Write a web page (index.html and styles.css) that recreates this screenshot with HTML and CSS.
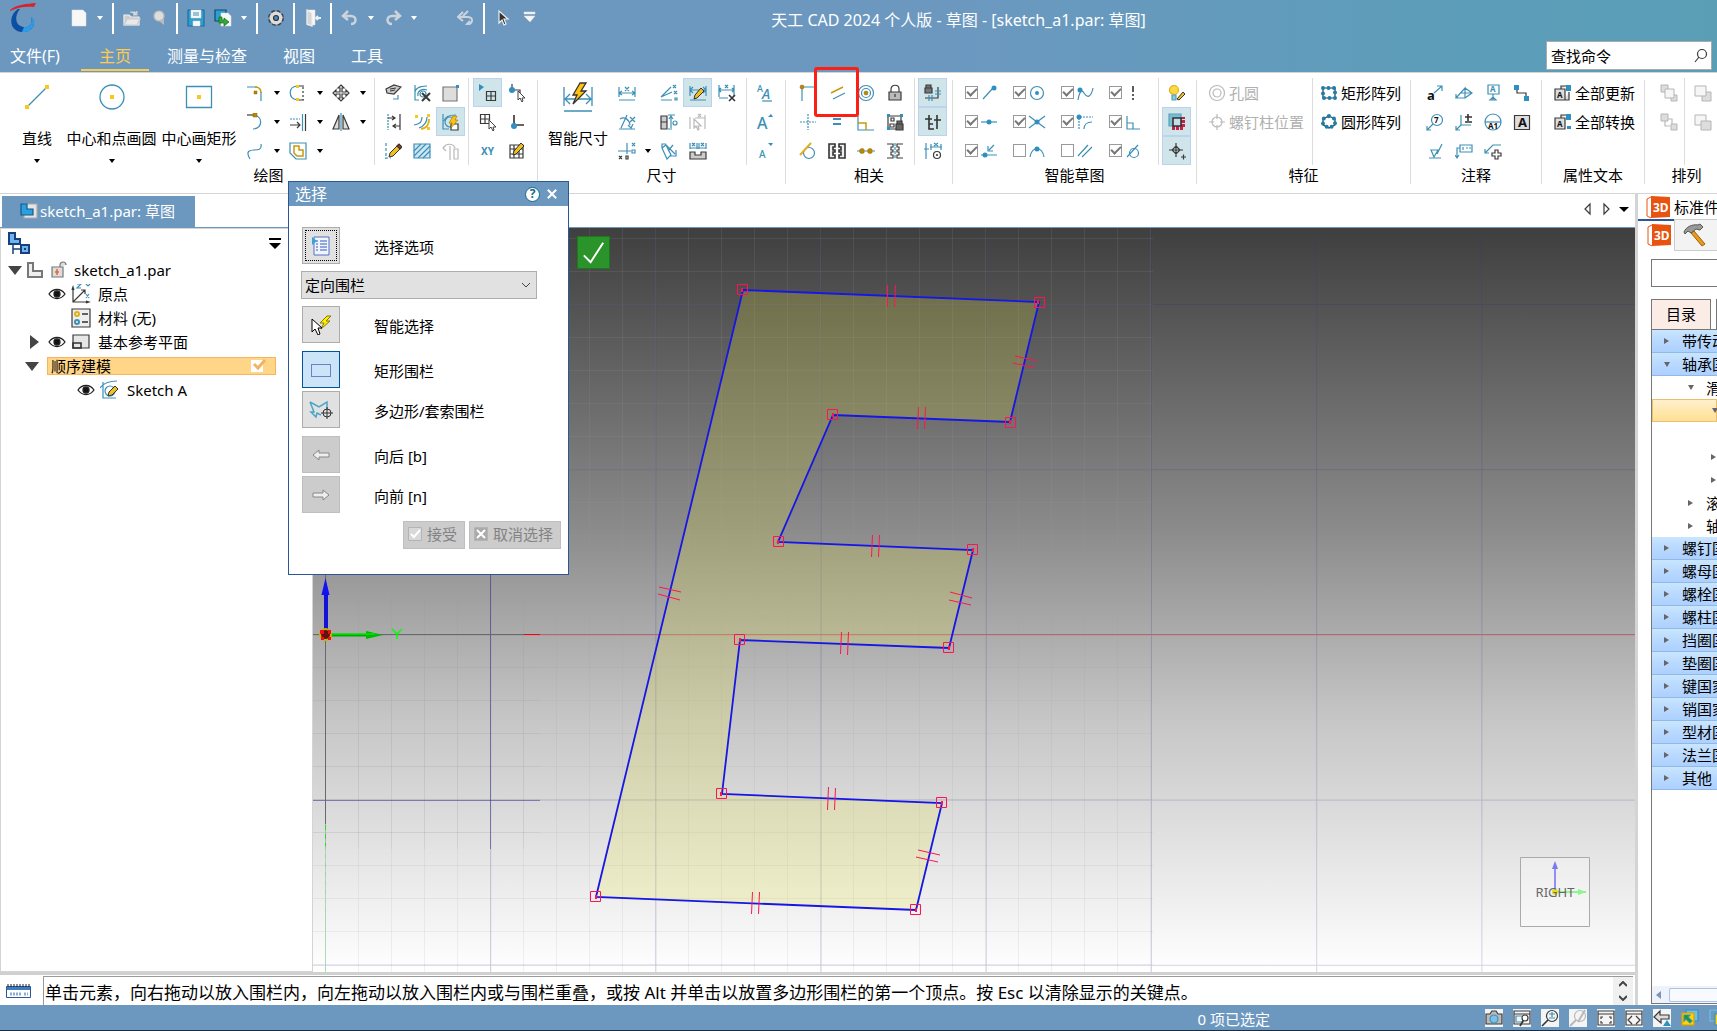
FILE: index.html
```html
<!DOCTYPE html>
<html lang="zh-CN">
<head>
<meta charset="utf-8">
<title>天工 CAD 2024 个人版 - 草图</title>
<link rel="stylesheet" href="styles.css">
</head>
<body>
<header class="head">
  <div class="quick">
    <svg class="logo" viewBox="0 0 30 30"><path d="M1 7C8 1 18 1 27 0L25 4C17 3 9 4 1 8Z" fill="#d8232a"/><path d="M9 6C-1 13 0 28 13 29C23 30 29 20 22 14C24 21 20 25 15 24C6 23 5 13 11 6Z" fill="#0b4fa5"/><path d="M15 24C20 25 24 21 22 14C29 20 23 30 13 29Z" fill="#2d9be8"/></svg>
    <button class="q q1" aria-label="新建"><svg class="i" viewBox="0 0 18 18"><path class="fw" d="M2 1h11l3 3v13H2z"/></svg></button>
    <span class="car w"></span><span class="bar"></span>
    <button class="q" aria-label="打开"><svg class="i" viewBox="0 0 18 18"><path d="M1 16V6h5l2 2h8v8z" fill="#ccc" stroke="#eee"/><path d="M7 3h5l2 3M14 2v4h-4M1 16l3-6h13l-3 6z" fill="#e8e8e8" stroke="#ccc"/></svg></button>
    <button class="q" aria-label="关联"><svg class="i" viewBox="0 0 18 18"><circle cx="9" cy="7" r="5" fill="#ddd" stroke="#bbb"/><path d="M9 12l5 4V9" fill="#bbb" stroke="none"/></svg></button>
    <span class="bar"></span>
    <button class="q" aria-label="保存"><svg class="i" viewBox="0 0 18 18"><path d="M1 1h16v16H1z" fill="#2f9fd0" stroke="#1b6f9d"/><path class="fw" d="M4 1h10v8H4zM6 12h7v5H6z"/><path d="M6 4h6M6 6h6"/></svg></button>
    <button class="q" aria-label="另存为"><svg class="i" viewBox="0 0 18 18"><path d="M1 1h11v11H1z" fill="#2f9fd0" stroke="#124a70"/><path class="fw" d="M7 4h7l3 3v10H7z"/><path d="M5 8v6h5v3l5-4-5-4v2H8V8z" fill="#2eab35" stroke="#136b1a" stroke-width=".7"/></svg></button>
    <span class="car w"></span><span class="bar"></span>
    <button class="q" aria-label="选项"><svg class="i" viewBox="0 0 18 18"><circle cx="9" cy="9" r="6" fill="#e6e6e6" stroke="#444" stroke-width="4" stroke-dasharray="3 1.7"/><circle cx="9" cy="9" r="5.500" fill="#ddd" stroke="#ddd" stroke-width="2"/><circle cx="9" cy="9" r="2.500" fill="#4d86b5" stroke="#333"/></svg></button>
    <span class="bar"></span>
    <button class="q" aria-label="关闭"><svg class="i" viewBox="0 0 18 18"><path class="fw" d="M3 1h8v15H3z"/><path d="M3 1l5 3v13l-5-2z" fill="#d5d5d5" stroke="#eee"/><path d="M17 9h-5m2-2l-2 2 2 2" stroke="#eee" stroke-width="2"/></svg></button>
    <span class="bar"></span>
    <button class="q" aria-label="撤销"><svg class="i" viewBox="0 0 18 18"><path d="M7 2L2 7l5 4M3 7h7c6 0 6 8 0 8" stroke="#ccd3da" stroke-width="2.500"/></svg></button>
    <span class="car w"></span>
    <button class="q" aria-label="重做"><svg class="i" viewBox="0 0 18 18"><path d="M11 2l5 5-5 4M15 7H8c-6 0-6 8 0 8" stroke="#ccd3da" stroke-width="2.500"/></svg></button>
    <span class="car w"></span>
    <button class="q far" aria-label="返回"><svg class="i" viewBox="0 0 18 18"><path d="M6 3L1 8l5 4M11 2L6 7M2 8h9c6 0 5 8-1 7l3-3" stroke="#ccd3da" stroke-width="2"/></svg></button>
    <span class="bar"></span>
    <button class="q" aria-label="选择"><svg class="i" viewBox="0 0 18 18"><path d="M5 2v12l3-3 2 5 2-1-2-5h4z" fill="#333" stroke="#eee"/></svg></button>
    <button class="q" aria-label="自定义"><svg class="i" viewBox="0 0 18 18"><path class="fw" d="M3 3h11v2H3zM3 7h11l-5 6z"/></svg></button>
    <h1 class="title">天工 CAD 2024 个人版 - 草图 - [sketch_a1.par: 草图]</h1>
  </div>
  <nav class="tabs">
    <a href="#file">文件(F)</a><a href="#home" class="on">主页</a><a href="#measure">测量与检查</a><a href="#view">视图</a><a href="#tools">工具</a>
    <label class="find"><input type="text" value="查找命令" aria-label="查找命令"><svg class="i" viewBox="0 0 18 18"><circle class="k" cx="11" cy="7" r="4.500"/><path class="k" d="M8 10l-4 5"/></svg></label>
  </nav>
</header>

<section class="ribbon">
  <div class="grp g1"><div class="row">
    <button class="big b-line"><svg viewBox="0 0 30 30"><path d="M5 25L25 5"/><path class="fy" d="M3 23h4v4H3zM23 3h4v4h-4z"/></svg><span>直线</span><i class="car"></i></button>
    <button class="big b-circ"><svg viewBox="0 0 30 30"><circle cx="15" cy="15" r="12"/><path class="fy" d="M13 13h4v4h-4z"/></svg><span>中心和点画圆</span><i class="car"></i></button>
    <button class="big b-rect"><svg viewBox="0 0 30 30"><path d="M2.500 4.500h25v21h-25z"/><path class="fy" d="M13 13h4v4h-4z"/></svg><span>中心画矩形</span><i class="car"></i></button>
    <div class="grid pairs">
      <button class="t"><svg class="i" viewBox="0 0 18 18"><path d="M1 3h10M15 8v9"/><path class="y" d="M9 3c4 0 6 2 6 6"/><path class="fd" d="M8 7h3v3H8z"/></svg></button>
      <button class="t"><svg class="i" viewBox="0 0 18 18"><path d="M8 2c9 2 9 13-1 14"/><path class="k" d="M1 2h7"/><path class="fd" d="M7 0h4v4H7z"/></svg></button>
      <button class="t"><svg class="i" viewBox="0 0 18 18"><path d="M4 17C-1 9 4 8 8 8s8 0 7-6"/></svg></button>
      <i class="car"></i><i class="car"></i><i class="car"></i>
      <button class="t"><svg class="i" viewBox="0 0 18 18"><path d="M8 2C-1 3-1 14 8 16"/><path class="k" d="M9 2h6M9 16h6"/><path class="k" stroke-dasharray="2 2" d="M14 3v13"/><path class="fy" d="M7 1h3v3H7zM7 14h3v3H7z"/></svg></button>
      <button class="t"><svg class="i" viewBox="0 0 18 18"><path stroke-dasharray="2 1" d="M1 6h10"/><path class="k" d="M1 12h10M8 9l3 3-3 3M16.500 1v17"/><path d="M13.500 1v17"/></svg></button>
      <button class="t"><svg class="i" viewBox="0 0 18 18"><path d="M1 1h16v16H7l-6-6z"/><path class="y" d="M5 4h5v4h4v6H8l-3-3z"/></svg></button>
      <i class="car"></i><i class="car"></i><i class="car"></i>
      <button class="t"><svg class="i" viewBox="0 0 18 18"><path class="k" fill="#fff" d="M9 1l3 3h-2v4h4V6l3 3-3 3v-2h-4v4h2l-3 3-3-3h2v-4H4v2L1 9l3-3v2h4V4H6z"/></svg></button>
      <button class="t"><svg class="i" viewBox="0 0 18 18"><path class="k" fill="#ddd" d="M7 2v14H1zM11 2v14h6z"/><path d="M9 0v18"/></svg></button>
      <span></span><i class="car"></i><i class="car"></i>
    </div>
    <span class="sep"></span>
    <div class="grid">
      <button class="t"><svg class="i" viewBox="0 0 18 18"><path class="k" fill="#ccc" d="M2 5l8-4 7 2-7 7-7-1zM6 5l6-1M6 7l5-1"/><path d="M9 15h5v-4"/></svg></button>
      <button class="t"><svg class="i" viewBox="0 0 18 18"><path stroke-dasharray="2 1" d="M4 1v16"/><path class="k" d="M16 1v16M4 5h7M8 3l3 2-3 2M16 13h-6M12 11l-3 2 3 2"/></svg></button>
      <button class="t"><svg class="i" viewBox="0 0 18 18"><path stroke-dasharray="3 2" d="M2 1v16M1 16h6"/><path class="pen" d="M5 15l1-4 8-8 3 3-8 8z"/><path d="M13 4l2-2 3 3-2 2z" fill="#a33" stroke="#333"/></svg></button>
      <button class="t"><svg class="i" viewBox="0 0 18 18"><path d="M2 1v15h4M2 9C2 4 7 2 14 2M5 12c-1-5 4-8 9-6"/><circle cx="10" cy="10" r="3"/><path class="k" stroke-width="2" d="M9 9l8 8M17 9l-8 8"/></svg></button>
      <button class="t"><svg class="i" viewBox="0 0 18 18"><path d="M9 4c0 5-2 7-8 8M14 4c0 6-3 9-8 11"/><path class="y2" d="M16 6c0 6-2 9-8 10"/><path class="fy" d="M2 2h3v3H2zM14 1h3v3h-3zM14 14h3v3h-3z"/></svg></button>
      <button class="t"><svg class="i" viewBox="0 0 18 18"><path d="M1 2h16v14H1z" fill="#cde7f2"/><path d="M1 9l7-7M1 14L13 2M5 16L17 4M10 16l7-7" /></svg></button>
      <button class="t"><svg class="i" viewBox="0 0 18 18"><path class="gs" fill="#ddd" d="M1 3h14v14H1z"/><path class="fb" d="M14 1h3v3h-3z"/></svg></button>
      <button class="t on"><svg class="i" viewBox="0 0 18 18"><path d="M1 1v15h6M2 8c1-5 6-6 12-6"/><circle cx="8" cy="9" r="5"/><path class="k" fill="#fff" d="M9 11h7v6H9z"/><path d="M11 3L7 10h3l-1 5 7-8h-3l2-4z" fill="#ffc20e" stroke="#876000" stroke-width=".5"/></svg></button>
      <button class="t"><svg class="i" viewBox="0 0 18 18"><path class="gl" d="M4 3L1 6l3 3M1 6c3-5 10-5 12 0M8 4v14M12 7h4v10h-4z"/></svg></button>
    </div>
    <span class="sep s3"></span>
    <div class="grid">
      <button class="t on"><svg class="i" viewBox="0 0 18 18"><path class="fb" d="M0 0l5 3-5 4z"/><path class="k" d="M7.500 7.500h9v9h-9zM12 7v10M7 12h10"/></svg></button>
      <button class="t"><svg class="i" viewBox="0 0 18 18"><path class="k" d="M1.500 1.500h9v9h-9zM6 1v10M1 6h10"/><path class="cur" d="M10 7v9l2-2 2 4 1-1-1-3h3z"/></svg></button>
      <button class="t"><svg class="i" viewBox="0 0 18 18"><text class="xy" x="2" y="13">XY</text></svg></button>
      <button class="t"><svg class="i" viewBox="0 0 18 18"><path class="k" d="M4 0v6h8v3"/><circle class="fb" cx="4" cy="6" r="3"/><path class="cur" d="M10 7v9l2-2 2 4 1-1-1-3h3z"/></svg></button>
      <button class="t"><svg class="i" viewBox="0 0 18 18"><path class="k2" d="M6 2v10h10"/><circle class="fb" cx="6" cy="13" r="3"/></svg></button>
      <button class="t"><svg class="i" viewBox="0 0 18 18"><path class="k" d="M2 3h13v13H2zM6 3v13M11 3v13M2 7h13M2 12h13"/><path class="pen" d="M5 13l1-4 7-8 3 3-8 8z"/></svg></button>
    </div>
  </div><h2>绘图</h2></div>

  <div class="grp g2"><div class="row">
    <button class="big b-dim"><svg viewBox="0 0 30 30"><path d="M1 5v19M29 5v19M1 29h28M2 17h26M7 12l-5 5 5 5M23 12l5 5-5 5"/><path d="M17 1l-7 12h4l-4 9 13-13h-5l5-8z" fill="#ffc20e" stroke="#333"/></svg><span>智能尺寸</span></button>
    <div class="grid">
      <button class="t"><svg class="i" viewBox="0 0 18 18"><path d="M1 3v10M17 3v10M1 9h16M4 7L1 9l3 2M14 7l3 2-3 2M1 16h16M7 3l4 4M11 3L7 7"/></svg></button>
      <button class="t"><svg class="i" viewBox="0 0 18 18"><path d="M1 16h16M3 15L9 2M2 6c4-3 9 0 10 6M10 12l3 3 2-4M12 4l5 5M17 4l-5 5"/></svg></button>
      <button class="t"><svg class="i" viewBox="0 0 18 18"><path d="M0 9h13M9 1v11M14 1l3 3M17 1l-3 3M14 8h3v3h-3z"/><path class="k" d="M1 14l3 3M4 14l-3 3M8 14h2v3H8z"/></svg></button>
    </div>
    <div class="grid carets"><span></span><span></span><i class="car"></i></div>
    <div class="grid">
      <button class="t"><svg class="i" viewBox="0 0 18 18"><path d="M1 13L11 3M1 13l11-5M1 16h11M13 1l3 3M16 1l-3 3M14 7l3 3M17 7l-3 3M15 14h2v2h-2z"/></svg></button>
      <button class="t"><svg class="i" viewBox="0 0 18 18"><path class="k" fill="#ccc" d="M1 3h6v13H1zM1 9h6"/><path d="M8 2h7M8 16h4M11 3v12M9 6l2-3 2 3"/><circle cx="15" cy="10" r="2"/></svg></button>
      <button class="t"><svg class="i" viewBox="0 0 18 18"><path d="M2 6l5 11 4-4L6 3zM6 3l9 9M2 6V2h4M13 3L8 9M10 14h6V8"/></svg></button>
      <button class="t on"><svg class="i" viewBox="0 0 18 18"><path d="M1 2v10M17 2v10M1 6h16M1 16h16M4 3L1 6l3 3M14 3l3 3-3 3"/><path class="pen" d="M5 15l1-4 6-7 3 3-7 7z"/></svg></button>
      <button class="t"><svg class="i" viewBox="0 0 18 18"><path class="gl" d="M1 4v12M16 2v14M6 5h10M9 1l3 3M12 1L9 4M5 6v9l2-2 2 4 1-1-1-3h3z"/></svg></button>
      <button class="t"><svg class="i" viewBox="0 0 18 18"><path d="M1 1v6M8 1v6M10 1v6M17 1v6M1 6h16M3 1l3 3M6 1L3 4M12 1l3 3M15 1l-3 3"/><path class="k" fill="#ccc" d="M1 10h5v3h6v-3h5v7H1z"/></svg></button>
      <button class="t"><svg class="i" viewBox="0 0 18 18"><path d="M1 1v12M16 1v12M1 6h15M3 4L1 6l2 2M14 4l2 2-2 2M7 1l3 3M10 1L7 4M1 14h9"/><path class="k2" d="M11 11l6 6M17 11l-6 6"/></svg></button>
    </div>
    <span class="sep s5"></span>
    <div class="grid">
      <button class="t"><svg class="i" viewBox="0 0 18 18"><text class="a" font-size="9" x="1" y="8">A</text><text class="a" font-size="14" font-style="italic" x="6" y="15">A</text><path d="M6 17h10"/></svg></button>
      <button class="t"><svg class="i" viewBox="0 0 18 18"><text class="a" font-size="16" x="1" y="16">A</text><path class="fb" d="M12 4h5l-2-3z"/></svg></button>
      <button class="t"><svg class="i" viewBox="0 0 18 18"><text class="a" font-size="10" x="3" y="16">A</text><path class="fb" d="M12 1h5l-2 3z"/></svg></button>
    </div>
  </div><h2>尺寸</h2></div>

  <div class="grp g3"><div class="row">
    <div class="grid">
      <button class="t"><svg class="i" viewBox="0 0 18 18"><path d="M3 4v13M4 3h12"/><circle class="fd" cx="3" cy="3" r="2"/></svg></button>
      <button class="t"><svg class="i" viewBox="0 0 18 18"><path stroke-dasharray="2 1" d="M9 1v16M1 9h16"/></svg></button>
      <button class="t"><svg class="i" viewBox="0 0 18 18"><circle cx="10" cy="11" r="5.500"/><path class="y2" d="M1 13L12 1"/></svg></button>
      <button class="t"><svg class="i" viewBox="0 0 18 18"><path class="y" d="M3 9l12-6"/><path d="M5 15l12-6"/></svg></button>
      <button class="t"><svg class="i" viewBox="0 0 18 18"><path stroke-width="2" d="M5 6h8M5 11h8"/></svg></button>
      <button class="t"><svg class="i" viewBox="0 0 18 18"><path class="k2" fill="#eee" d="M1 2h6v3H5v3h2v2H5v3h2v3H1zM17 2h-6v3h2v3h-2v2h2v3h-2v3h6z"/></svg></button>
      <button class="t"><svg class="i" viewBox="0 0 18 18"><circle cx="9" cy="9" r="7.500"/><circle cx="9" cy="9" r="4.500"/><circle class="fd" cx="9" cy="9" r="2"/></svg></button>
      <button class="t"><svg class="i" viewBox="0 0 18 18"><path d="M1 3v14h16"/><path class="y" d="M1 10h8v7"/></svg></button>
      <button class="t"><svg class="i" viewBox="0 0 18 18"><path d="M0 9h18" stroke-dasharray="3 1"/><circle class="fd" cx="5" cy="9" r="2.500"/><circle class="fd" cx="13" cy="9" r="2.500"/></svg></button>
      <button class="t"><svg class="i" viewBox="0 0 18 18"><path class="k" d="M5 8V5c0-5 8-5 8 0v3"/><path class="k" fill="#bbb" d="M3 8h12v8H3zM9 10v3"/></svg></button>
      <button class="t"><svg class="i" viewBox="0 0 18 18"><path class="k" d="M2 3h13v13H2zM5 5h3v3H5zM4 11h4v3H4z"/><path class="fb" d="M1 1h3v3H1zM14 1h3v3h-3zM1 14h3v3H1z"/><path class="k" fill="#666" d="M10 11h7v6h-7zM11 11V8h5v3"/></svg></button>
      <button class="t"><svg class="i" viewBox="0 0 18 18"><path class="k" d="M1 2h6v3H5v3h2v2H5v3h2v3H1M17 2h-6v3h2v3h-2v2h2v3h-2v3h6"/><path d="M9 1v16" stroke-dasharray="3 1"/></svg></button>
    </div>
    <span class="sep s5"></span>
    <div class="grid">
      <button class="t on"><svg class="i" viewBox="0 0 18 18"><path class="k" fill="#777" d="M1 4h7v5H1zM2 4V1h5v3"/><path class="k" d="M1 14h13V3"/><path d="M5 11v6M8 11v6M11 7h6M11 10h6"/></svg></button>
      <button class="t on"><svg class="i" viewBox="0 0 18 18"><path class="k2" d="M5 2v14h5M1 6h7M13 2v14M10 7h7M5 11h4"/></svg></button>
      <button class="t"><svg class="i" viewBox="0 0 18 18"><path d="M2 1v16M0 7h5M6 5h12M7 2v6M17 2v6M10 1l4 3M14 1l-4 3"/><circle class="k" cx="13" cy="13" r="3.500"/><circle cx="13" cy="13" r="1" fill="#333" stroke="none"/></svg></button>
    </div>
  </div><h2>相关</h2></div>

  <div class="grp g4"><div class="row">
    <div class="grid checks">
      <label><input type="checkbox" checked><svg class="i" viewBox="0 0 18 18"><path d="M3 15L13 4"/><circle class="fb" cx="14" cy="4" r="2.500"/></svg></label>
      <label><input type="checkbox" checked><svg class="i" viewBox="0 0 18 18"><path d="M1 9h16"/><circle class="fb" cx="9" cy="9" r="2.500"/></svg></label>
      <label><input type="checkbox" checked><svg class="i" viewBox="0 0 18 18"><path d="M1 13h16M14 3L9 8M8 4v5h5"/><circle class="fb" cx="5" cy="13" r="2.500"/></svg></label>
      <label><input type="checkbox" checked><svg class="i" viewBox="0 0 18 18"><circle cx="9" cy="9" r="6.500"/><circle class="fb" cx="9" cy="9" r="2"/></svg></label>
      <label><input type="checkbox" checked><svg class="i" viewBox="0 0 18 18"><path d="M1 3l16 12M1 15L17 3"/><circle class="fb" cx="9" cy="9" r="2.500"/></svg></label>
      <label><input type="checkbox"><svg class="i" viewBox="0 0 18 18"><path d="M2 15C4 4 14 4 16 15"/><circle class="fb" cx="9" cy="7" r="2.500"/></svg></label>
      <label><input type="checkbox" checked><svg class="i" viewBox="0 0 18 18"><path d="M2 16c1-6 3-12 6-7s7 5 9-5"/><circle class="fb" cx="4" cy="6" r="2.500"/></svg></label>
      <label><input type="checkbox" checked><svg class="i" viewBox="0 0 18 18"><path stroke-dasharray="2 1" d="M3 5v11M4 4h13"/><path d="M8 16c0-4 3-7 8-7"/><circle class="fb" cx="3" cy="4" r="2.500"/></svg></label>
      <label><input type="checkbox"><svg class="i" viewBox="0 0 18 18"><path d="M2 14L12 3M6 15L16 5"/></svg></label>
      <label><input type="checkbox" checked><svg class="i" viewBox="0 0 18 18"><path class="k2" stroke-dasharray="6 2 2 2" d="M9 2v14"/></svg></label>
      <label><input type="checkbox" checked><svg class="i" viewBox="0 0 18 18"><path d="M3 3v13h13M3 10h6v6"/></svg></label>
      <label><input type="checkbox" checked><svg class="i" viewBox="0 0 18 18"><circle cx="10" cy="11" r="4.500"/><path d="M3 15L14 3"/></svg></label>
    </div>
    <span class="sep s2"></span>
    <div class="grid">
      <button class="t"><svg class="i" viewBox="0 0 18 18"><circle cx="6" cy="6" r="4.500" fill="#ffd840" stroke="#e0b01c"/><path d="M4 11h4v5H4z" fill="#8cc" stroke="#5aa0bd"/><path class="pen" d="M9 15l6-7 2 2-6 6z"/></svg></button>
      <button class="t on"><svg class="i" viewBox="0 0 18 18"><path d="M1 1h12v12H1z" fill="#7bbcd3" stroke="#5aa0bd"/><path d="M4 15h11V4" stroke="#c22347" stroke-width="4" stroke-dasharray="3 1"/><path class="k2" fill="#c5dde5" d="M5 5h8v8H5z"/></svg></button>
      <button class="t on"><svg class="i" viewBox="0 0 18 18"><path class="k" d="M8 1v14M1 8h14M8 4l4 4-4 4-4-4zM13 15h5M15.500 12.500v5"/></svg></button>
    </div>
  </div><h2>智能草图</h2></div>

  <div class="grp g5"><div class="row">
    <div class="cmds c1">
      <button class="cmd" disabled><svg class="i" viewBox="0 0 18 18"><circle class="gl" cx="9" cy="9" r="7.500"/><circle class="gl" cx="9" cy="9" r="4"/></svg>孔圆</button>
      <button class="cmd" disabled><svg class="i" viewBox="0 0 18 18"><circle class="gl" cx="9" cy="9" r="5"/><path class="gl" d="M9 1v5M9 12v5M1 9h5M12 9h5"/></svg>螺钉柱位置</button>
    </div>
    <span class="sep"></span>
    <div class="cmds c2">
      <button class="cmd"><svg class="i" viewBox="0 0 18 18"><path class="k" d="M3 4h12v10H3z"/><path class="dots" d="M3 4h12v10H3z"/></svg>矩形阵列</button>
      <button class="cmd"><svg class="i" viewBox="0 0 18 18"><path class="k" d="M9 3l6 3v6l-6 3-6-3V6z"/><path class="dots" d="M9 3l6 3v6l-6 3-6-3V6z"/></svg>圆形阵列</button>
    </div>
  </div><h2>特征</h2></div>

  <div class="grp g6"><div class="row">
    <div class="grid">
      <button class="t"><svg class="i" viewBox="0 0 18 18"><text class="ab" x="1" y="16">a</text><path d="M8 9l8-7M11 2h5v5"/></svg></button>
      <button class="t"><svg class="i" viewBox="0 0 18 18"><circle cx="11" cy="7" r="5.500"/><path d="M7 11l-6 6M1 13v4h4"/><text class="nb" x="8" y="10">7</text></svg></button>
      <button class="t"><svg class="i" viewBox="0 0 18 18"><path d="M3 16h12M5 8h7l-4 7zM11 12l5-10"/></svg></button>
      <button class="t"><svg class="i" viewBox="0 0 18 18"><path d="M1 14l9-10v10zM10 4l7 5-7 5M5 9h12M1 10v4h4"/></svg></button>
      <button class="t"><svg class="i" viewBox="0 0 18 18"><path d="M6 2v10h10M6 12l-5 5M1 13v4h4"/><path class="k2" d="M13 1v7M10 4h7M10 9h7"/></svg></button>
      <button class="t"><svg class="i" viewBox="0 0 18 18"><path d="M5 3h12v7H5zM8 5v3M11 6h2M14 6h2M5 6H2v10M0 13l2 3 2-3"/></svg></button>
      <button class="t"><svg class="i" viewBox="0 0 18 18"><path d="M4 1h11v9H4zM9 10v6M6 16h6l-3-3z"/><text class="nb c" x="6" y="8">A</text></svg></button>
      <button class="t"><svg class="i" viewBox="0 0 18 18"><circle cx="9" cy="9" r="8"/><path d="M1 9h16"/><text class="nb" x="4" y="16">A1</text></svg></button>
      <button class="t"><svg class="i" viewBox="0 0 18 18"><path d="M1 11l8-8h8M1 7v4h4"/><path class="k" fill="#fff" d="M11 8h3v3h3v3h-3v3h-3v-3H8v-3h3z"/></svg></button>
      <button class="t"><svg class="i" viewBox="0 0 18 18"><path class="k" d="M4 5v4h9v5"/><path class="fb" d="M1 1h5v5H1zM11 12h5v5h-5z"/></svg></button>
      <button class="t"><svg class="i" viewBox="0 0 18 18"><path class="k" fill="#ddd" d="M1.500 2.500h15v14h-15z"/><text class="ab" x="5" y="14">A</text></svg></button>
    </div>
  </div><h2>注释</h2></div>

  <div class="grp g7"><div class="row">
    <div class="cmds c3">
      <button class="cmd"><svg class="i" viewBox="0 0 18 18"><path class="k" fill="#ddd" d="M1 5h10v11H1zM7 5V2h6M10 16h5V8"/><path class="fb" d="M12 1h5v6h-5z"/><text class="nb" x="3" y="14">A</text></svg>全部更新</button>
      <button class="cmd"><svg class="i" viewBox="0 0 18 18"><path class="k" fill="#ddd" d="M1 5h10v11H1zM7 5V2h6"/><path class="fb" d="M12 1h5v6h-5zM13 13h4v3h-4z"/><text class="nb" x="3" y="14">A</text></svg>全部转换</button>
    </div>
  </div><h2>属性文本</h2></div>

  <div class="grp g8"><div class="row">
    <div class="grid">
      <button class="t" disabled><svg class="i" viewBox="0 0 18 18"><path class="st" d="M1 1h7v7H1zM11 11h6v6h-6z"/><path class="st lt" d="M5 5h9v9H5z"/></svg></button>
      <button class="t" disabled><svg class="i" viewBox="0 0 18 18"><path class="st" d="M1 1h7v7H1zM11 11h6v6h-6z"/><path class="gl" d="M8 6h4v5M5 8v5h5"/></svg></button><span></span>
    </div>
    <span class="sep s2"></span>
    <div class="grid">
      <button class="t" disabled><svg class="i" viewBox="0 0 18 18"><path class="st" d="M8 8h9v9H8z"/><path class="st lt" d="M1 2h11v10H1z"/></svg></button>
      <button class="t" disabled><svg class="i" viewBox="0 0 18 18"><path class="st lt" d="M1 2h11v10H1z"/><path class="st" d="M7 8h10v9H7z"/></svg></button><span></span>
    </div>
  </div><h2>排列</h2></div>
  <div class="mark"></div>
</section>

<main class="work">
  <div class="doc">
    <div class="strip">
      <a href="#doc" class="doctab"><svg class="i" viewBox="0 0 18 18"><path d="M4 2h13v14H4z" fill="#e4e4e4" stroke="#aaa"/><path d="M1 2h6v5h6v6H1z" fill="#2ba0dc" stroke="#135b8c"/></svg>sketch_a1.par: 草图</a>
      <div class="nav">
        <svg class="i" viewBox="0 0 18 18"><path class="k" d="M11 4v10L6 9z"/></svg><svg class="i" viewBox="0 0 18 18"><path class="k" d="M7 4v10l5-5z"/></svg><svg class="i" viewBox="0 0 18 18"><path d="M4 7h10l-5 5z" fill="#000" stroke="none"/></svg>
      </div>
    </div>
    <div class="split">
      <aside class="tree">
        <div class="treehead">
          <svg width="24" height="24" viewBox="0 0 24 24"><path d="M2 1h6v6h5v5H2z" fill="#6eb4ee" stroke="#17407d" stroke-width="2"/><path d="M6 13v9M6 17h8" fill="none" stroke="#17407d" stroke-width="1.500"/><path d="M14 13h8v8h-8z" fill="#6eb4ee" stroke="#17407d" stroke-width="2"/><path d="M17 16h2v2h-2z" fill="#17407d"/></svg>
          <svg width="14" height="14" viewBox="0 0 14 14"><path d="M1 1h12v2H1zM1 6h12l-6 6z"/></svg>
        </div>
        <ul>
          <li class="l0"><i class="dn"></i><svg class="i" viewBox="0 0 18 18"><path class="gs" fill="#eee" stroke-width="2" d="M2 2h5v8h9v6H2z"/></svg><svg class="i ml" viewBox="0 0 18 18"><path class="gs" fill="#ddd" d="M2 6h11v10H2zM10 6V4c0-4 6-4 6 0"/><path d="M7 8v6M5 11h4" stroke="#e8662d" stroke-width="1.500"/></svg><span class="n0">sketch_a1.par</span></li>
          <li class="l1"><svg class="eye" viewBox="0 0 18 12"><path d="M1 6c4-6 12-6 16 0-4 6-12 6-16 0z"/><circle cx="9" cy="6" r="3"/></svg><svg class="i o" viewBox="0 0 20 20"><path class="k" d="M2 4v14h15M1 6l1-3 1 3M2 18L14 6M15 17l3 1-3 1M10 6h4v4"/><path d="M6 0h4L6 4h4M15 0l2 2 2-2M15 10l3 4M18 10l-3 4"/></svg><span>原点</span></li>
          <li class="l1b"><svg class="i o" viewBox="0 0 20 20"><path class="k" fill="#eee" d="M1 1h18v18H1z"/><path class="k2" d="M11 6h6M11 14h6"/><circle class="y2" cx="6" cy="6" r="2"/><circle cx="6" cy="14" r="2" stroke-width="2"/></svg><span>材料 (无)</span></li>
          <li class="l1c"><i class="rt"></i><svg class="eye" viewBox="0 0 18 12"><path d="M1 6c4-6 12-6 16 0-4 6-12 6-16 0z"/><circle cx="9" cy="6" r="3"/></svg><svg class="i o" viewBox="0 0 20 20"><path class="k" fill="#e6e6e6" d="M2 3h16v13H2z"/><path class="k2" d="M2 11h8v5H2z"/></svg><span>基本参考平面</span></li>
          <li class="l1d"><i class="dn"></i><div class="sel"><span>顺序建模</span><svg viewBox="0 0 16 14"><path d="M0 1h12v12H0z" fill="#fff"/><path d="M3 5l4 4 7-8" fill="none" stroke="#f2b366" stroke-width="3"/></svg></div></li>
          <li class="l2"><svg class="eye" viewBox="0 0 18 12"><path d="M1 6c4-6 12-6 16 0-4 6-12 6-16 0z"/><circle cx="9" cy="6" r="3"/></svg><svg class="i o" viewBox="0 0 20 20"><path d="M3 2v16h13M0 8C4 2 10 1 17 1"/><circle cx="10" cy="11" r="5"/><path class="pen" d="M8 16l1-4 6-6 3 3-6 6z"/></svg><span>Sketch A</span></li>
        </ul>
      </aside>
      <section class="canvas">
        <svg class="scene" viewBox="0 0 1322 744" preserveAspectRatio="xMinYMin slice">
          <g transform="translate(-313 -228)">
            <defs>
              <pattern id="minor" x="325" y="304" width="33" height="33" patternUnits="userSpaceOnUse"><path d="M.5 0V33M0 .5H33" stroke="#9a9aa0" stroke-opacity=".14" fill="none"/></pattern>
              <pattern id="major" x="325" y="304" width="165.200" height="165.200" patternUnits="userSpaceOnUse"><path d="M.5 0V166M0 .5H166" stroke="#2c2c96" stroke-opacity=".2" fill="none"/></pattern>
            </defs>
            <path d="M313 228h840v744H313z" fill="url(#minor)"/>
            <path d="M313 228h1400v744H313z" fill="url(#major)"/>
            <path d="M313 228h227v621H313z" fill="url(#minor)"/>
            <path d="M490.500 228v621M313 800.500h227M313 469.500h227" stroke="#24248f" stroke-opacity=".45" fill="none"/>
            <path d="M540 634.500h1200" stroke="#e03030" stroke-opacity=".5"/>
            <path d="M325.500 228v596M313 634.500h211" stroke="#696969"/>
            <path d="M524 634.500h16" stroke="#f00"/>
            <path d="M325.500 825v21" stroke="#1fe01f" stroke-dasharray="5 4"/><path d="M325.500 849v123" stroke="#9be89b" stroke-dasharray="5 4"/>
            <path d="M743 290L1039 302L1010 422L833 415L778 542L973 550L949 648L740 640L722 794L942 803L916 910L596 897Z" fill="#eee840" fill-opacity=".21" stroke="#1616e6" stroke-width="1.800"/>
            <g fill="none" stroke="#ff1453" stroke-width="1">
              <path d="M737.500 284.500h10v10h-10zM1034.500 297.500h10v10h-10zM1005.500 417.500h10v10h-10zM827.500 409.500h10v10h-10zM773.500 536.500h10v10h-10zM967.500 544.500h10v10h-10zM943.500 642.500h10v10h-10zM734.500 634.500h10v10h-10zM716.500 788.500h10v10h-10zM936.500 797.500h10v10h-10zM910.500 904.500h10v10h-10zM590.500 891.500h10v10h-10z"/>
              <path d="M742 288v4M1038 300v4M1010 420v4M833 413v4M778 540v4M973 548v4M949 646v4M740 638v4M721 792v4M942 801v4M916 908v4M596 895v4" stroke-width="2"/>
              <path d="M887.500 285v22M895.500 285l-1 22M918.500 407l-1 22M925.500 407l-1 22M872.500 535l-1 22M879.500 535l-1 22M841.500 632l-1 22M848.500 632l-1 23M828.500 787l-1 23M835.500 788l-1 22M752.500 892l-1 22M759.500 892l-1 22"/>
              <path d="M1015 356l22 5M1013 363l22 5M659 587l22 5M658 594l22 6M950 592l22 6M949 600l22 5M918 850l22 5M916 857l22 5"/>
            </g>
            <path d="M326 634V592" stroke="#1212d8" stroke-width="4"/><path d="M325.500 578l4 17h-8z" fill="#1212f5"/>
            <path d="M330 635h38" stroke="#0a0" stroke-width="3"/><path d="M366 631l17 4-17 4z" fill="#00b800"/><path d="M330 634h45" stroke="#0f0"/>
            <path d="M392 629l5 5v5M402 629l-5 5" fill="none" stroke="#0f0" stroke-width="1.500"/>
            <circle cx="325.500" cy="634.500" r="5.500" fill="#651010" stroke="#c8b400" stroke-width="2"/><path d="M320 630h4v4h-4zM328 630h3v4h-3zM321 637h3v3h-3zM328 637h3v3h-3z" fill="#f01010"/>
          </g>
        </svg>
        <button class="ok" aria-label="完成"><svg viewBox="0 0 32 32"><path d="M6 19l7 7L26 6" fill="none" stroke="#fff" stroke-width="2"/></svg></button>
        <svg class="cube" viewBox="0 0 70 70"><path d="M.5.5h69v69H.5z" fill="#fff" fill-opacity=".3" stroke="#aaa"/><path d="M35 35V8" stroke="#8f8ff5" stroke-width="2"/><path d="M35 4l3 8h-6z" fill="#7a7aee"/><path d="M35 35h31" stroke="#8cf58c" stroke-width="2"/><path d="M58 32l8 3-8 3z" fill="#8cf58c"/><circle cx="35" cy="35" r="3" fill="#e4dc20"/><text x="35" y="40" text-anchor="middle">RIGHT</text></svg>
      </section>
    </div>
    <div class="prompt">
      <svg width="26" height="14" viewBox="0 0 26 14"><path d="M.5 2.500h24v11H.5z" fill="#fff" stroke="#2b579a"/><path d="M1 3h23v3H1z" fill="#3d7cc0"/><path d="M2 0v3M5 0v3M8 0v3M11 0v3M14 0v3M17 0v3M20 0v3M23 0v3" stroke="#222"/><path d="M4 10h12M18 10h4" stroke="#88aed6" stroke-width="3" stroke-dasharray="2 1"/></svg>
      <p>单击元素，向右拖动以放入围栏内，向左拖动以放入围栏内或与围栏重叠，或按 Alt 并单击以放置多边形围栏的第一个顶点。按 Esc 以清除显示的关键点。</p>
      <div class="spin"><button aria-label="上"><svg viewBox="0 0 8 6"><path d="M0 5l4-4 4 4"/></svg></button><button aria-label="下"><svg viewBox="0 0 8 6"><path d="M0 1l4 4 4-4"/></svg></button></div>
    </div>
  </div>

  <aside class="lib">
    <div class="libtitle"><svg class="d3" viewBox="0 0 26 24"><path d="M6 1l19 1v20L6 23z" fill="#e8530f"/><path d="M6 2L2 4v17l4 2" fill="#fff" stroke="#e8530f"/><text x="8" y="17">3D</text></svg>标准件</div>
    <div class="libtabs"><svg class="d3" viewBox="0 0 26 24"><path d="M6 1l19 1v20L6 23z" fill="#e8530f"/><path d="M6 2L2 4v17l4 2" fill="#fff" stroke="#e8530f"/><text x="8" y="17">3D</text></svg><button aria-label="工具"><svg viewBox="0 0 24 24"><path d="M11 8l11 13-3 2L8 10z" fill="#e89a1c" stroke="#a06208"/><path d="M1 9c2-5 8-8 14-7l2-1 3 3-3 3-4-1-5 4-3-2-3 3z" fill="#999" stroke="#555"/></svg></button></div>
    <input class="libfind" type="text" aria-label="查找零件">
    <div class="cat"><button>目录</button><button></button></div>
    <ul class="list">
      <li class="b"><i class="rt"></i>带传动</li><li class="b"><i class="dn"></i>轴承国</li><li class="c1"><i class="dn"></i>滑</li><li class="c2 s"><i class="dn"></i></li><li></li><li class="c2"><i class="rt"></i></li><li class="c2"><i class="rt"></i></li><li class="c1"><i class="rt"></i>滚</li><li class="c1"><i class="rt"></i>轴</li><li class="b"><i class="rt"></i>螺钉国</li><li class="b"><i class="rt"></i>螺母国</li><li class="b"><i class="rt"></i>螺栓国</li><li class="b"><i class="rt"></i>螺柱国</li><li class="b"><i class="rt"></i>挡圈国</li><li class="b"><i class="rt"></i>垫圈国</li><li class="b"><i class="rt"></i>键国家</li><li class="b"><i class="rt"></i>销国家</li><li class="b"><i class="rt"></i>型材国</li><li class="b"><i class="rt"></i>法兰国</li><li class="b"><i class="rt"></i>其他</li>
    </ul>
    <div class="hs"><svg width="8" height="10" viewBox="0 0 8 10"><path d="M6 1v8L1 5z" fill="#7f93b5"/></svg><span></span></div>
  </aside>
</main>

<footer class="status"><span>0 项已选定</span>
  <div class="sicons">
    <svg class="i" viewBox="0 0 18 18"><path class="bgw" d="M0 0h18v18H0z"/><path class="k" fill="#bbb" d="M1 5h4l2-3h4l2 3h4v10H1z"/><circle cx="9" cy="10" r="4" fill="#7cc0e8"/></svg>
    <svg class="i" viewBox="0 0 18 18"><path class="bgw" d="M0 0h18v18H0z"/><path class="k" d="M1 2h16v13H1zM1 5h16"/><path d="M3 7h7v6H3z"/><circle class="k" fill="#fff" cx="12" cy="9" r="3"/><path class="k2" d="M10 12l-3 5"/></svg>
    <svg class="i" viewBox="0 0 18 18"><path class="bgw" d="M0 0h18v18H0z"/><circle class="k" cx="11" cy="7" r="5.500"/><path class="k2" d="M7 11l-6 6"/><path d="M11 3v5M8 5h6M8 9h6"/></svg>
    <svg class="i" viewBox="0 0 18 18"><path class="bgw" d="M0 0h18v18H0z"/><circle class="gl" cx="11" cy="7" r="5.500"/><path class="gl" stroke-width="2" d="M7 11l-6 6M9 13l7-12"/></svg>
    <svg class="i" viewBox="0 0 18 18"><path class="bgw" d="M0 0h18v18H0z"/><path class="k" d="M1 2h16v14H1zM1 5h16M4 10V8h2M12 8h2v2M4 12v2h2M12 14h2v-2"/></svg>
    <svg class="i" viewBox="0 0 18 18"><path class="bgw" d="M0 0h18v18H0z"/><path class="k" d="M1 2h16v14H1zM1 5h16M7 7l-4 4 4 4M11 7l4 4-4 4"/></svg>
    <svg class="i" viewBox="0 0 18 18"><path class="bgw" d="M0 0h18v18H0z"/><path class="k" fill="#ddd" d="M1 8l6-6v4h9v4H8v4z"/><path class="fb" d="M14 11l4 6h-8z"/></svg>
    <svg class="i" viewBox="0 0 18 18"><path d="M5 1h12v11H5z" fill="#6ac0e8" stroke="#3a90b8"/><path d="M1 4h12v12H1z" fill="#ffd500" stroke="#d8a000"/><path d="M3 6h6L7 8l4 4-2 2-4-4-2 2z" fill="#149b28"/></svg>
    <svg class="i" viewBox="0 0 18 18"><path d="M1 1h12v11H1z" stroke="#6ac0e8"/><path d="M6 5h11v11H6z" fill="#ffd500"/></svg>
  </div>
</footer>

<section class="dialog" role="dialog" aria-label="选择">
  <div class="dtitle"><span>选择</span><button class="help" aria-label="帮助">?</button><button class="x" aria-label="关闭"><svg viewBox="0 0 12 12"><path d="M1 1l10 10M11 1L1 11" stroke="#fff" stroke-width="2.500"/></svg></button></div>
  <div class="dbody">
    <div class="opt"><button id="o1" class="focus"><svg viewBox="0 0 20 20"><path d="M3 1h15v18H3z" fill="#f1f5ff" stroke="#4e71c6"/><path d="M5 5h2M9 5h7M5 8h2M9 8h7M5 11h2M9 11h7M5 14h2M9 14h7" stroke="#3559b5"/><path d="M1 1l5 4-5 4z" fill="#3ba2d8"/></svg></button><label for="o1">选择选项</label></div>
    <select aria-label="围栏类型"><option>定向围栏</option></select>
    <div class="opt"><button id="o2"><svg viewBox="0 0 20 20"><path d="M16 1L9 8h4l-3 6 9-8h-4l5-5z" fill="#ffee00" stroke="#8a7a00"/><path d="M1 4v13l3-3 3 6 2-1-2-6h4z" fill="#fff" stroke="#000"/></svg></button><label for="o2">智能选择</label></div>
    <div class="opt gap"><button id="o3" class="act"><svg viewBox="0 0 20 20"><path d="M.5 4.500h19v12H.5z" fill="none" stroke="#1a1a8c" stroke-dasharray="1 1"/></svg></button><label for="o3">矩形围栏</label></div>
    <div class="opt near"><button id="o4"><svg class="wide" viewBox="0 0 24 20"><path d="M1 2l9 5 8-5v8M1 2l4 10H2l5 5 1-4 4 2" fill="none" stroke="#4aa5c8" stroke-width="1.500"/><circle cx="18" cy="13" r="4" fill="none" stroke="#333"/><path d="M18 7v12M12 13h12" stroke="#333"/></svg></button><label for="o4">多边形/套索围栏</label></div>
    <div class="opt gap"><button id="o5" disabled><svg viewBox="0 0 20 20"><path d="M2 10l6-5v3h10v4H8v3z" fill="#eee" stroke="#888"/></svg></button><label for="o5">向后 [b]</label></div>
    <div class="opt near"><button id="o6" disabled><svg viewBox="0 0 20 20"><path d="M18 10l-6-5v3H2v4h10v3z" fill="#eee" stroke="#888"/></svg></button><label for="o6">向前 [n]</label></div>
    <div class="dfoot"><button disabled><svg viewBox="0 0 14 14"><path d="M.5.5h13v13H.5z" fill="#d8d8d8" stroke="#b4b4b4"/><path d="M3 7l3 3 6-7" fill="none" stroke="#fff" stroke-width="2"/></svg>接受</button><button disabled><svg viewBox="0 0 14 14"><path d="M.5.5h13v13H.5z" fill="#aaa" stroke="#b4b4b4"/><path d="M3 3l8 8M11 3l-8 8" fill="none" stroke="#fff" stroke-width="2"/></svg>取消选择</button></div>
  </div>
</section>
</body>
</html>
```
FILE: styles.css
```css
* { box-sizing: border-box; }
:root { --blue: #6c98c0; --line: #d4d4d4; }
body {
  margin: 0; min-height: 100vh; display: flex; flex-direction: column;
  position: relative; overflow: hidden; background: #fff; color: #000;
  font: 15px/20px "Noto Sans", "Noto Sans CJK SC", sans-serif;
}
button, input, select { font: inherit; color: inherit; }
button { padding: 0; border: 0; background: none; }
ul { margin: 0; padding: 0; list-style: none; }
svg { display: block; flex: none; }
.i { width: 18px; height: 18px; fill: none; stroke: #3d8fb5; stroke-width: 1.2; }

/* shared icon paints */
.k { stroke: #3a3a3a; }
.k2 { stroke: #333; stroke-width: 1.6; }
.y { stroke: #c79a0a; stroke-width: 1.5; }
.y2 { stroke: #e0b01c; stroke-width: 2; }
.gs { stroke: #777; }
.gl { stroke: #b9b9b9; }
.fy { fill: #f9c81c; stroke: none; }
.fd { fill: #b98a00; stroke: #8a6700; stroke-width: .5; }
.fb { fill: #2f8fc0; stroke: none; }
.fw { fill: #f7f7f7; stroke: #ddd; stroke-width: .5; }
.bgw { fill: #f4f4f4; stroke: none; }
.pen { fill: #f0c020; stroke: #333; stroke-width: 1; }
.cur { fill: #fff; stroke: #444; stroke-width: 1; }
.st { fill: #ddd; stroke: #b5b5b5; stroke-width: 1; }
.st.lt { fill: #f6f6f6; }
.dots { stroke: #1d7ea8; stroke-width: 4; stroke-linecap: round; stroke-dasharray: 0 5.5; }
.i text { stroke: none; fill: #3d8fb5; font-family: "Noto Sans", sans-serif; }
.i .xy { font-size: 10px; font-weight: 700; }
.i .a { font-weight: 500; }
.i .ab { font-size: 13px; font-weight: 700; fill: #111; }
.i .nb { font-size: 8px; font-weight: 700; fill: #111; }
.i .nb.c { fill: #3d8fb5; }

.car { align-self: center; justify-self: center; width: 0; height: 0; border: 3px solid transparent; border-top: 4px solid #000; border-bottom: 0; }
.car.w { border-top-color: #fff; margin: 0 5px; }
.dn, .rt { width: 0; height: 0; flex: none; }
.dn { border: 7px solid transparent; border-top: 9px solid #444; border-bottom: 0; }
.rt { border: 7px solid transparent; border-left: 9px solid #444; border-right: 0; }

/* title bar and menu */
.head { height: 73px; background: linear-gradient(90deg, #6c98c0 55%, #5c9db9 85%, #5a9eb6); border-bottom: 1px solid var(--line); color: #fff; }
.quick { display: flex; align-items: center; height: 36px; padding-left: 9px; position: relative; }
.logo { width: 30px; height: 30px; }
.q { width: 27px; height: 28px; display: grid; place-items: center; }
.q1 { margin-left: 26px; }
.bar { width: 2px; height: 31px; background: #fff; margin: 0 4px; }
.far { margin-left: 30px; }
.title { position: absolute; left: 0; right: 0; top: 10px; margin: 0; padding-left: 200px; text-align: center; font: 400 16px/20px "Noto Sans", "Noto Sans CJK SC", sans-serif; pointer-events: none; }
.tabs { display: flex; height: 36px; align-items: center; padding: 0 5px 0 10px; font-size: 16px; }
.tabs a { color: #fff; text-decoration: none; height: 34px; line-height: 38px; padding: 0 18px; }
.tabs a:first-child { padding: 0 21px 0 0; }
.tabs .on { color: #ffcb4b; border-bottom: 2px solid #ffcb4b; }
.find { margin-left: auto; width: 166px; height: 29px; margin-top: 3px; display: flex; align-items: center; background: #fff; border: 1px solid #aaa; color: #000; font-size: 15px; padding: 0 2px 0 4px; }
.find input { border: 0; padding: 0; width: 0; flex: 1; outline: 0; background: none; }

/* ribbon */
.ribbon { display: flex; position: relative; height: 121px; border-bottom: 1px solid var(--line); }
.grp { flex: none; padding-top: 5px; border-right: 1px solid transparent; border-image: linear-gradient(transparent 8px, #dcdcdc 8px 110px, transparent 110px) 1; }
.row { display: flex; height: 87px; }
.grp h2 { margin: 0; font-size: 15px; font-weight: 400; line-height: 20px; text-align: center; }
.g1 { width: 538px; } .g1 .row { padding-left: 8px; }
.g2 { width: 248px; } .g2 .row { padding-left: 6px; }
.g3 { width: 167px; } .g3 .row { padding-left: 7px; }
.g4 { width: 244px; } .g4 .row { padding-left: 12px; }
.g5 { width: 214px; } .g5 .row { padding-left: 11px; }
.g6 { width: 131px; } .g6 .row { padding-left: 9px; }
.g7 { width: 103px; } .g7 .row { padding-left: 12px; }
.g8 { width: 72px; flex: 1 0 0; overflow: hidden; border-right: 0; } .g8 .row { padding-left: 9px; }
.g8 h2 { padding-left: 11px; }
.big { display: flex; flex-direction: column; align-items: center; }
.big svg { width: 30px; height: 30px; margin: 4px 0 16px; fill: none; stroke: #3d8fb5; stroke-width: 1.3; }
.big span { white-space: nowrap; line-height: 20px; }
.big .car { margin-top: 11px; }
.b-line { width: 58px; } .b-circ { width: 91px; } .b-rect { width: 84px; } .b-dim { width: 68px; }
.grid { display: grid; grid-auto-flow: column; grid-template-rows: repeat(3, 29px); grid-auto-columns: 29px; }
.pairs { grid-template-columns: 28px 15px 28px 15px 28px 15px; }
.carets { grid-auto-columns: 13px; }
.checks { grid-auto-columns: 48px; }
.t { display: grid; place-items: center; }
.t.on { background: #cfe5ea; border: 1px solid #bcd3ef; }
.sep { width: 1px; height: 87px; background: #dcdcdc; margin: 0 3px 0 4px; }
.sep.s3 { margin: 0 4px 0 3px; } .sep.s5 { margin: 0 3px 0 5px; } .sep.s2 { margin: 0 3px 0 1px; }
.checks label { display: flex; align-items: center; gap: 2px; }
.checks input { appearance: none; width: 13px; height: 13px; margin: 0; border: 1px solid #999; background: #fff; display: grid; place-items: center; }
.checks input:checked::before { content: ""; width: 8px; height: 4px; border: solid #777; border-width: 0 0 2px 2px; transform: rotate(-45deg); margin-bottom: 3px; }
.cmds { display: flex; flex-direction: column; }
.c1 { width: 100px; } .c2 { padding-left: 4px; }
.cmd { display: flex; align-items: center; gap: 3px; height: 29px; white-space: nowrap; }
.cmd:disabled { color: #b0b0b0; }
.mark { position: absolute; left: 814px; top: -6px; width: 45px; height: 50px; border: 3px solid #fb1f14; border-radius: 3px; }

/* work area */
.work { flex: 1; display: flex; min-height: 0; }
.doc { flex: 1; min-width: 0; display: flex; flex-direction: column; }
.strip { display: flex; height: 34px; padding: 2px 2px 0; border-bottom: 1px solid #6c98c0; }
.doctab { display: flex; align-items: center; gap: 2px; width: 193px; padding: 0 0 2px 18px; background: var(--blue); color: #fff; text-decoration: none; white-space: nowrap; }
.nav { margin-left: auto; display: flex; align-items: center; padding-bottom: 5px; }
.split { flex: 1; display: flex; min-height: 0; }
.tree { width: 313px; border: 1px solid var(--line); }
.treehead { display: flex; justify-content: space-between; align-items: center; height: 29px; padding: 0 30px 0 6px; }
.tree li { display: flex; align-items: center; height: 24px; white-space: nowrap; }
.l0 { padding-left: 7px; } .l0 .i { margin-left: 4px; } .l0 .ml { margin-left: 6px; } .n0 { margin-left: 6px; }
.l1, .l1c { padding-left: 47px; } .l1b { padding-left: 70px; } .l1c { padding-left: 29px; } .l1d { padding-left: 24px; } .l2 { padding-left: 76px; }
.l1c .rt { margin-right: 9px; }
.eye { width: 18px; height: 12px; fill: #fff; stroke: #222; stroke-width: 1.3; }
.eye circle { fill: #111; }
.i.o { width: 20px; height: 20px; margin: 0 7px 0 5px; }
.l1b .i.o { margin-left: 0; }
.sel { display: flex; align-items: center; justify-content: space-between; width: 229px; height: 18px; margin-left: 8px; padding: 0 8px 0 3px; background: #ffd588; border: 1px solid #f5b460; }
.sel svg { width: 16px; height: 14px; }
.canvas { flex: 1; min-width: 0; position: relative; overflow: hidden; background: linear-gradient(#3f3f3f, #8a8a8a 40%, #c6c6c6 66%, #fff); }
.scene { width: 100%; height: 100%; position: absolute; }
.ok { position: absolute; left: 264px; top: 8px; width: 33px; height: 33px; background: #2a942a; border: 1px solid #1c7a1c; }
.cube { position: absolute; right: 45px; bottom: 45px; width: 70px; height: 70px; }
.cube text { font-size: 13px; fill: #666; font-family: "Noto Sans", sans-serif; }
.prompt { display: flex; align-items: center; height: 33px; border-top: 3px solid #d0d0d0; padding: 1px 2px 0 6px; }
.prompt p { flex: 1; min-width: 0; align-self: stretch; margin: 0 0 0 11px; padding-left: 1px; border: solid #999; border-width: 1px 0 0 1px; font-size: 17px; line-height: 32px; white-space: nowrap; overflow: hidden; }
.spin { width: 20px; align-self: stretch; display: flex; flex-direction: column; background: #f0f0f0; border-top: 1px solid #999; }
.spin button { flex: 1; display: grid; place-items: center; }
.spin svg { width: 8px; height: 6px; fill: none; stroke: #444; stroke-width: 2; }

/* parts library */
.lib { width: 82px; overflow: hidden; border-left: 3px solid var(--line); white-space: nowrap; display: flex; flex-direction: column; }
.libtitle { display: flex; align-items: center; height: 25px; padding-left: 7px; gap: 3px; }
.d3 { width: 26px; height: 24px; }
.d3 text { fill: #fff; font: 700 12px "Noto Sans", sans-serif; }
.libtabs { display: flex; height: 32px; padding-left: 8px; gap: 2px; background: linear-gradient(#2b579a 2px, transparent 2px) 0 0 / 36px 100% no-repeat; align-items: center; }
.libtabs button { width: 60px; height: 32px; flex: none; background: #f3f3f3; border: 1px solid #ccc; padding-left: 8px; }
.libtabs button svg { width: 24px; height: 24px; }
.libfind { height: 28px; width: 200px; margin: 8px 0 12px 13px; border: 1px solid #777; }
.cat { display: flex; gap: 5px; padding-left: 13px; }
.cat button { width: 60px; height: 30px; flex: none; background: #fbece6; border: 1px solid #777; border-bottom: 0; line-height: 26px; padding-bottom: 2px; }
.list { flex: 1; margin-left: 13px; border: solid #777; border-width: 1px 0 0 1px; }
.list li { display: flex; align-items: center; height: 23px; padding-left: 12px; gap: 12px; }
.list .c1 { padding-left: 36px; } .list .c2 { padding-left: 59px; }
.list .b { background: linear-gradient(#c9e6ff, #badaff 45%, #acd0ff); border-bottom: 1px solid #93b8e4; }
.list .s { background: linear-gradient(#fff0cc, #ffdf94); border: 1px solid #e8c070; }
.list .dn { border-width: 5px 3px 0 3px; border-top-color: #666; }
.list .rt { border-width: 3px 0 3px 5px; border-left-color: #666; margin-right: 1px; }
.hs { display: flex; align-items: center; gap: 6px; height: 18px; margin: 0 0 1px 13px; border: solid #777; border-width: 0 0 1px 1px; background: #eef2fb; padding-left: 3px; }
.hs span { flex: 1; height: 14px; border: 1px solid #a8c4e8; border-right: 0; border-radius: 2px 0 0 2px; background: #f8faff; }

/* status bar */
.status { display: flex; align-items: center; height: 26px; background: var(--blue); border-bottom: 1px solid #1d2b3c; color: #fff; justify-content: flex-end; }
.status > span { margin-right: 215px; padding-top: 2px; }
.sicons { display: flex; gap: 10px; width: 232px; overflow: hidden; }

/* select dialog */
.dialog { position: absolute; left: 288px; top: 181px; width: 281px; height: 394px; background: #fff; border: 1px solid #2b579a; }
.dtitle { display: flex; align-items: center; height: 24px; background: var(--blue); color: #fff; padding: 0 11px 0 6px; font-size: 16px; }
.dtitle span { flex: 1; }
.help { width: 15px; height: 15px; border-radius: 50%; background: #fff; border: 1px solid #136a8a; color: #136a8a; font-size: 12px; font-weight: 700; line-height: 12px; }
.x { margin-left: 7px; } .x svg { width: 10px; height: 10px; }
.dbody { padding: 21px 7px 0 12px; }
.opt { display: flex; align-items: center; gap: 34px; height: 37px; margin-bottom: 7px; padding-left: 1px; }
.opt label { padding-top: 2px; }
.opt button { width: 38px; height: 37px; background: #e1e1e1; border: 1px solid #adadad; display: grid; place-items: center; }
.opt svg { width: 20px; height: 20px; } .opt .wide { width: 24px; }
.opt .focus { outline: 1px dotted #000; outline-offset: -4px; }
.opt .act { background: #cce4f7; border-color: #005499; }
.opt button:disabled { background: #ccc; border-color: #bfbfbf; }
.opt.gap { margin: 8px 0 3px; }
.opt.near { margin: 0 0 8px; }
.dbody select { width: 236px; height: 28px; margin-bottom: 7px; padding: 0 4px 0 3px; display: block; appearance: none; border: 1px solid #adadad; border-radius: 0; background: #e1e1e1 url("data:image/svg+xml,%3Csvg xmlns='http://www.w3.org/2000/svg' width='10' height='6'%3E%3Cpath d='M1 1l4 4 4-4' fill='none' stroke='%23444'/%3E%3C/svg%3E") no-repeat right 5px center; }
.dfoot { display: flex; justify-content: flex-end; gap: 4px; }
.dfoot button { display: flex; align-items: center; gap: 5px; height: 28px; padding: 0 7px 2px 4px; background: #ccc; border: 1px solid #bfbfbf; color: #838383; white-space: nowrap; }
.dfoot svg { width: 14px; height: 14px; }
```
